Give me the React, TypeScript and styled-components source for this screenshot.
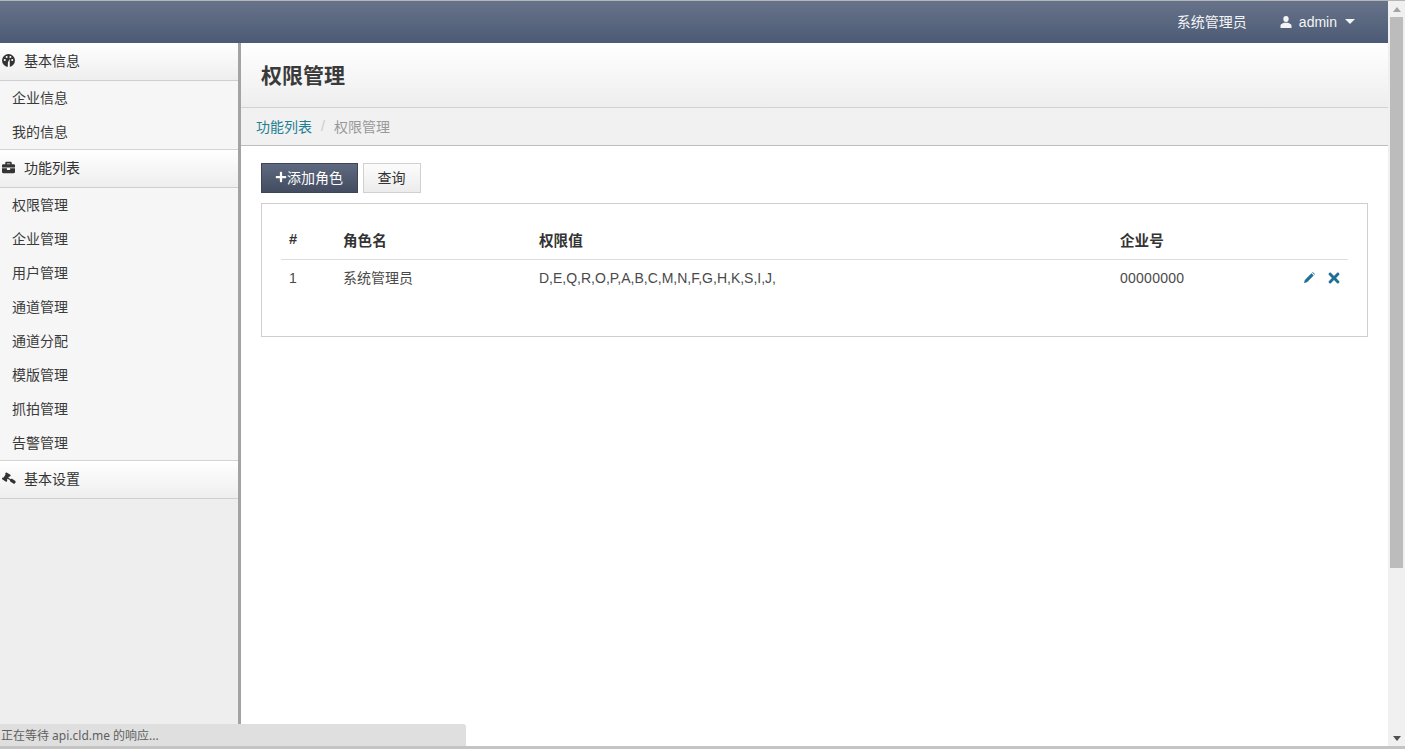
import React from "react";
import styled, { createGlobalStyle } from "styled-components";
import { FaBriefcase, FaGavel, FaPlus, FaTimes } from "react-icons/fa";

const Global = createGlobalStyle`
  html, body { margin: 0; padding: 0; height: 100%; overflow: hidden; background: #fff; }
  body { font-family: "Liberation Sans", "Noto Sans CJK SC", sans-serif; font-size: 14px; color: #333; }
  * { box-sizing: border-box; }
`;

const Screen = styled.div`
  position: relative;
  width: 1405px;
  height: 749px;
  display: flex;
  flex-direction: column;
  overflow: hidden;
`;
const Viewport = styled.div`
  flex: 1;
  min-height: 0;
  display: flex;
  border-top: 1px solid #b4b6ba;
`;
const Page = styled.div`
  width: 1388px;
  display: flex;
  flex-direction: column;
`;
const TopBar = styled.header`
  height: 42px;
  flex: none;
  display: flex;
  align-items: center;
  justify-content: flex-end;
  padding-right: 33px;
  padding-bottom: 1px;
  background: linear-gradient(#667389, #4c5a75);
  color: #f4f5f7;
`;
const Role = styled.span`
  font-size: 14px;
  margin-right: 33px;
  margin-bottom: 2px;
`;
const UserMenu = styled.span`
  display: flex;
  align-items: center;
  font-size: 14px;
  gap: 7px;
  svg { display: block; }
`;
const Caret = styled.span`
  width: 0;
  height: 0;
  margin-left: 1px;
  border-left: 5px solid transparent;
  border-right: 5px solid transparent;
  border-top: 5px solid #f4f5f7;
`;
const Body = styled.div`
  flex: 1;
  min-height: 0;
  display: flex;
`;
const Sidebar = styled.nav`
  width: 241px;
  flex: none;
  background: #eeeeee;
  border-right: 3px solid #a3a3a3;
`;
const GroupHeader = styled.div<{ $first?: boolean }>`
  height: ${(p) => (p.$first ? 38 : 39)}px;
  display: flex;
  align-items: center;
  padding-left: 2px;
  padding-bottom: 3px;
  background: linear-gradient(#ffffff, #eeeeee);
  border-bottom: 1px solid #cfcfcf;
  border-top: ${(p) => (p.$first ? "none" : "1px solid #d4d4d4")};
  color: #333;
  font-size: 14px;
  > svg { width: 13px; height: 13px; color: #333; flex: none; margin-right: 9px; }
`;
const FlippedGavel = styled(FaGavel)`
  transform: scaleX(-1) rotate(12deg);
`;
const GroupList = styled.div<{ $n: number }>`
  background: #f6f6f6;
  height: ${(p) => p.$n * 34}px;
  display: flex;
  flex-direction: column;
`;
const Item = styled.div`
  height: 34px;
  flex: none;
  display: flex;
  align-items: center;
  padding-left: 12px;
  padding-bottom: 2px;
  font-size: 14px;
  color: #3a3a3a;
`;
const Main = styled.main`
  flex: 1;
  min-width: 0;
  display: flex;
  flex-direction: column;
`;
const PageHead = styled.div`
  height: 65px;
  flex: none;
  display: flex;
  align-items: center;
  padding-left: 20px;
  background: linear-gradient(#ffffff, #eeeeee);
  border-bottom: 1px solid #d2d2d2;
`;
const Title = styled.h1`
  margin: 0 0 2px;
  font-size: 21px;
  font-weight: 700;
  color: #3a3a3a;
`;
const Crumbs = styled.div`
  height: 38px;
  flex: none;
  display: flex;
  align-items: center;
  padding-left: 15px;
  padding-bottom: 2px;
  background: #f1f1f1;
  border-bottom: 1px solid #bdbdbd;
  font-size: 14px;
  color: #999;
`;
const CrumbLink = styled.a`
  color: #1f7f92;
`;
const Sep = styled.span`
  color: #ccc;
  margin: 0 9px;
`;
const Content = styled.div`
  padding: 17px 20px 0;
`;
const Actions = styled.div`
  display: flex;
  gap: 5px;
  margin-bottom: 10px;
`;
const PrimaryButton = styled.button`
  width: 97px;
  height: 30px;
  padding: 0 0 2px;
  display: flex;
  align-items: center;
  justify-content: center;
  border: 1px solid #3d4656;
  background: linear-gradient(#5e6a80, #434c60);
  color: #fff;
  font: inherit;
  svg { width: 12px; height: 12px; margin-left: -1px; }
`;
const PlainButton = styled.button`
  width: 58px;
  height: 30px;
  padding: 0 1px 2px 0;
  border: 1px solid #d0d0d0;
  background: linear-gradient(#fcfcfc, #ececec);
  color: #333;
  font: inherit;
`;
const Card = styled.section`
  height: 134px;
  border: 1px solid #cfcfcf;
  padding: 19px 19px 0;
`;
const Table = styled.table`
  width: 100%;
  border-collapse: collapse;
  table-layout: fixed;
  font-size: 14px;
`;
const Th = styled.th<{ $w?: number }>`
  ${(p) => (p.$w ? `width: ${p.$w}px;` : "")}
  height: 36px;
  padding: 0 0 3px 8px;
  text-align: left;
  font-size: 14.6px;
  font-weight: 700;
  color: #333;
  border-bottom: 1px solid #ddd;
`;
const Td = styled.td<{ $cjk?: boolean }>`
  height: 37px;
  padding: 0 0 ${(p) => (p.$cjk ? 1 : 0)}px 8px;
  color: #4a4a4a;
`;
const Number = styled.span`
  letter-spacing: 0.25px;
`;
const RowIcons = styled.div`
  display: flex;
  align-items: center;
  justify-content: flex-end;
  gap: 13px;
  padding-right: 8px;
  color: #1f6f97;
`;
const Cross = styled(FaTimes)`
  width: 12px;
  height: 16px;
`;
const Scrollbar = styled.div`
  width: 17px;
  flex: none;
  display: flex;
  flex-direction: column;
  align-items: center;
  background: #f0f0f0;
`;
const ScrollArrow = styled.div`
  height: 16px;
  flex: none;
  display: flex;
  align-items: center;
  justify-content: center;
`;
const ArrowUp = styled.span`
  border: 4px solid transparent;
  border-top: 0;
  border-bottom: 5px solid #a3a3a3;
`;
const ArrowDown = styled.span`
  border: 4px solid transparent;
  border-bottom: 0;
  border-top: 5px solid #505050;
`;
const Thumb = styled.div`
  width: 13px;
  height: 551px;
  flex: none;
  background: #bcbcbc;
`;
const Track = styled.div`
  flex: 1;
`;
const BottomEdge = styled.div`
  height: 3px;
  flex: none;
  background: #c4c4c4;
`;
const StatusBubble = styled.div`
  position: absolute;
  left: 0;
  bottom: 3px;
  width: 466px;
  height: 22px;
  display: flex;
  align-items: center;
  padding-left: 1px;
  background: #dfdfdf;
  border-top-right-radius: 3px;
  font-family: "Noto Sans", "Noto Sans CJK SC", sans-serif;
  font-size: 12px;
  color: #5f5f5f;
`;

const GaugeIcon = () => (
  <svg viewBox="0 0 14 14" aria-hidden="true">
    <circle cx="7" cy="7" r="7" fill="currentColor" />
    <circle cx="3" cy="6.5" r="1.1" fill="#fff" />
    <circle cx="5" cy="3.2" r="1.1" fill="#fff" />
    <circle cx="9" cy="3.2" r="1.1" fill="#fff" />
    <circle cx="11" cy="6.5" r="1.1" fill="#fff" />
    <path d="M6.2 14 L6.4 9 L8.4 5 L8.3 9.4 L8.4 14 Z" fill="#fff" />
  </svg>
);
const UserIcon = () => (
  <svg width="12" height="12" viewBox="0 0 12 12" fill="currentColor" aria-hidden="true">
    <ellipse cx="6" cy="3" rx="2.7" ry="3" />
    <path d="M0.5 12 V9.5 C0.5 8 2.5 7.5 4 6.7 H8 C9.5 7.5 11.5 8 11.5 9.5 V12 Z" />
  </svg>
);
const PencilIcon = () => (
  <svg width="11" height="11" viewBox="0 0 11 11" fill="currentColor" aria-hidden="true">
    <path d="M0 11 L0.8 8 L7.5 1.3 L9.7 3.5 L3 10.2 Z" />
    <path d="M8.2 0.6 L8.8 0 L11 2.2 L10.4 2.8 Z" />
  </svg>
);

const groups: { icon: React.ReactNode; name: string; items: string[] }[] = [
  { icon: <GaugeIcon />, name: "基本信息", items: ["企业信息", "我的信息"] },
  {
    icon: <FaBriefcase />,
    name: "功能列表",
    items: ["权限管理", "企业管理", "用户管理", "通道管理", "通道分配", "模版管理", "抓拍管理", "告警管理"],
  },
  { icon: <FlippedGavel />, name: "基本设置", items: [] },
];

export default function App() {
  return (
    <Screen>
      <Global />
      <Viewport>
        <Page>
          <TopBar>
            <Role>系统管理员</Role>
            <UserMenu>
              <UserIcon />
              <span>admin</span>
              <Caret />
            </UserMenu>
          </TopBar>
          <Body>
            <Sidebar>
              {groups.map((g, i) => (
                <div key={g.name}>
                  <GroupHeader $first={i === 0}>
                    {g.icon}
                    {g.name}
                  </GroupHeader>
                  {g.items.length > 0 && (
                    <GroupList $n={g.items.length}>
                      {g.items.map((t) => (
                        <Item key={t}>{t}</Item>
                      ))}
                    </GroupList>
                  )}
                </div>
              ))}
            </Sidebar>
            <Main>
              <PageHead>
                <Title>权限管理</Title>
              </PageHead>
              <Crumbs>
                <CrumbLink>功能列表</CrumbLink>
                <Sep>/</Sep>
                <span>权限管理</span>
              </Crumbs>
              <Content>
                <Actions>
                  <PrimaryButton>
                    <FaPlus />
                    添加角色
                  </PrimaryButton>
                  <PlainButton>查询</PlainButton>
                </Actions>
                <Card>
                  <Table>
                    <thead>
                      <tr>
                        <Th $w={54}>#</Th>
                        <Th $w={196}>角色名</Th>
                        <Th $w={581}>权限值</Th>
                        <Th $w={170}>企业号</Th>
                        <Th />
                      </tr>
                    </thead>
                    <tbody>
                      <tr>
                        <Td>1</Td>
                        <Td $cjk>系统管理员</Td>
                        <Td>D,E,Q,R,O,P,A,B,C,M,N,F,G,H,K,S,I,J,</Td>
                        <Td><Number>00000000</Number></Td>
                        <Td>
                          <RowIcons>
                            <PencilIcon />
                            <Cross />
                          </RowIcons>
                        </Td>
                      </tr>
                    </tbody>
                  </Table>
                </Card>
              </Content>
            </Main>
          </Body>
        </Page>
        <Scrollbar>
          <ScrollArrow>
            <ArrowUp />
          </ScrollArrow>
          <Thumb />
          <Track />
          <ScrollArrow>
            <ArrowDown />
          </ScrollArrow>
        </Scrollbar>
      </Viewport>
      <BottomEdge />
      <StatusBubble>正在等待 api.cld.me 的响应...</StatusBubble>
    </Screen>
  );
}
